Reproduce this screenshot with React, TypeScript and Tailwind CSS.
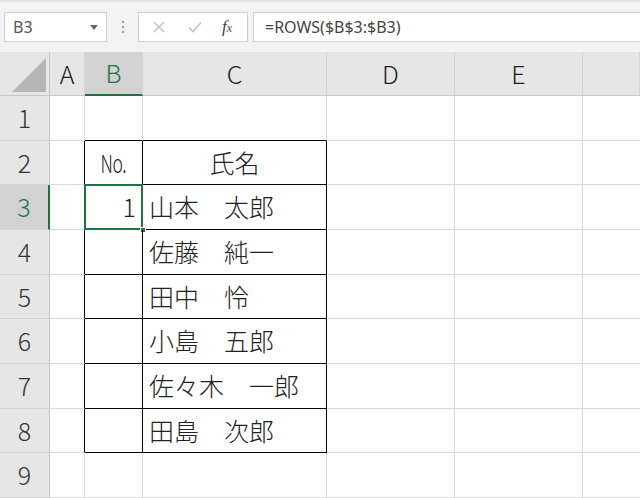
import React from 'react';

// Excel-like sheet: name box + formula bar, headers, and a small bordered table

const COLS = ['A', 'B', 'C', 'D', 'E', ''];
const ROWS = [1, 2, 3, 4, 5, 6, 7, 8, 9];

const names: Record<number, string> = {
  3: '山本　太郎',
  4: '佐藤　純一',
  5: '田中　怜',
  6: '小島　五郎',
  7: '佐々木　一郎',
  8: '田島　次郎',
};

const cellFont = { fontFamily: '"Noto Sans CJK JP", "Noto Sans", sans-serif' };
const uiFont = { fontFamily: '"Noto Sans", "Noto Sans CJK JP", sans-serif' };

function Toolbar() {
  return (
    <div className="h-[52px] bg-[#f3f3f3] border-t-2 border-[#e2e2e2] pt-[10px] flex items-start" style={uiFont}>
      {/* Name box */}
      <div className="ml-[4px] w-[103px] h-[30px] bg-white border border-[#d0d0d0] flex items-center px-[8px] text-[16px] text-[#555]">
        <span className="flex-1">B3</span>
        <span className="w-0 h-0 border-l-[4px] border-r-[4px] border-t-[5px] border-l-transparent border-r-transparent border-t-[#666]" />
      </div>
      {/* Grip dots */}
      <div className="w-[31px] h-[30px] flex flex-col items-center justify-center gap-[3px]">
        <span className="w-[2px] h-[2px] bg-[#999]" />
        <span className="w-[2px] h-[2px] bg-[#999]" />
        <span className="w-[2px] h-[2px] bg-[#999]" />
      </div>
      {/* Cancel / enter / fx */}
      <div className="w-[110px] h-[30px] bg-white border border-[#d0d0d0] flex items-center">
        <svg width="14" height="14" viewBox="0 0 14 14" className="ml-[13px]">
          <path d="M2 2 L12 12 M12 2 L2 12" stroke="#c4c4c4" strokeWidth="1.5" fill="none" />
        </svg>
        <svg width="16" height="14" viewBox="0 0 16 14" className="ml-[21px]">
          <path d="M2 7.5 L6 11.5 L14 2.5" stroke="#c4c4c4" strokeWidth="1.6" fill="none" />
        </svg>
        <span className="ml-[19px] text-[17px] italic text-[#444]" style={{ fontFamily: '"Liberation Serif", serif' }}>
          f<span className="text-[12px]">x</span>
        </span>
      </div>
      {/* Formula input */}
      <div className="ml-[5px] flex-1 h-[30px] bg-white border border-[#d0d0d0] border-r-0 flex items-center px-[11px] text-[16px] text-[#444]">
        =ROWS($B$3:$B3)
      </div>
    </div>
  );
}

export default function App() {
  return (
    <div className="w-[640px] h-[498px] overflow-hidden bg-white">
      <Toolbar />
      <div className="grid grid-cols-[50px_35px_58px_184px_128px_128px_1fr] grid-rows-[44px_repeat(9,44.67px)] font-light">
        {/* Select-all corner */}
        <div className="bg-[#e6e6e6] border-r border-b border-[#c6c6c6] relative">
          <svg width="50" height="44" className="absolute inset-0">
            <polygon points="12,40 46,40 46,6" fill="#b6b6b6" />
          </svg>
        </div>
        {COLS.map((c, i) => {
          const sel = c === 'B';
          return (
            <div
              key={'h' + i}
              className={`flex items-center justify-center text-[25px] border-r border-[#d4d4d4] ${
                sel
                  ? 'bg-[#d2d2d2] text-[#217346] border-b-2 border-b-[#217346]'
                  : 'bg-[#e6e6e6] text-[#222] border-b border-b-[#c6c6c6]'
              }`}
              style={cellFont}
            >
              {c}
            </div>
          );
        })}

        {ROWS.map((r) => {
          const selRow = r === 3;
          const inTable = r >= 2 && r <= 8;
          return (
            <React.Fragment key={r}>
              <div
                className={`flex items-center justify-center text-[25px] border-b border-[#d4d4d4] ${
                  selRow
                    ? 'bg-[#d2d2d2] text-[#217346] border-r-2 border-r-[#217346]'
                    : 'bg-[#e6e6e6] text-[#333] border-r border-r-[#c6c6c6]'
                }`}
                style={cellFont}
              >
                {r}
              </div>
              {/* A */}
              <div className={`border-b border-[#dadada] border-r ${inTable ? 'border-r-black' : 'border-r-[#dadada]'}`} />
              {/* B */}
              <div
                className={`relative border-r border-b flex items-center justify-end pr-[6px] text-[25px] text-[#222] ${
                  inTable ? 'border-r-black' : 'border-r-[#dadada]'
                } ${r >= 1 && r <= 8 ? 'border-b-black' : 'border-b-[#dadada]'}`}
                style={cellFont}
              >
                {r === 2 && (
                  <span className="w-full flex justify-center pl-[6px]">
                    <span className="inline-block scale-x-70 tracking-tight">No.</span>
                  </span>
                )}
                {r === 3 && (
                  <>
                    1
                    <div className="absolute -left-px -top-px -right-px -bottom-px border-2 border-[#217346]" />
                    <div className="absolute -right-[4px] -bottom-[4px] w-[6px] h-[6px] bg-[#217346] border border-white" />
                  </>
                )}
              </div>
              {/* C */}
              <div
                className={`border-r border-b flex items-center text-[25px] text-[#222] ${
                  inTable ? 'border-r-black' : 'border-r-[#dadada]'
                } ${r >= 1 && r <= 8 ? 'border-b-black' : 'border-b-[#dadada]'} ${r === 2 ? 'justify-center' : 'pl-[6px]'}`}
                style={cellFont}
              >
                {r === 2 ? '氏名' : names[r] ?? ''}
              </div>
              <div className="border-r border-b border-[#dadada]" />
              <div className="border-r border-b border-[#dadada]" />
              <div className="border-b border-[#dadada]" />
            </React.Fragment>
          );
        })}
      </div>
    </div>
  );
}
